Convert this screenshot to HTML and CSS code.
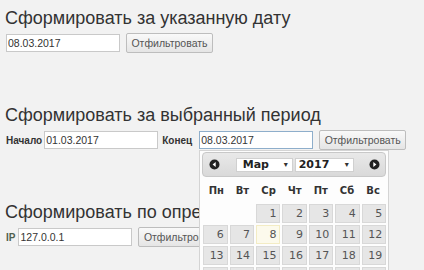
FILE: index.html
```html
<!DOCTYPE html>
<html lang="ru">
<head>
  <meta charset="UTF-8" />
  <title>Отчёты</title>
  <link rel="stylesheet" href="styles.css">
</head>
<body>

  <!-- ONE DATE -->
  <div class="section">
    <h2>Сформировать за указанную дату</h2>
    <div class="row">
      <input type="text" class="field" value="08.03.2017" />
      <button class="btn">Отфильтровать</button>
    </div>
  </div>

  <!-- PERIOD -->
  <div class="section">
    <h2>Сформировать за выбранный период</h2>
    <div class="row">
      <label class="lbl">Начало</label>
      <input type="text" class="field" value="01.03.2017" />
      <label class="lbl lbl-end">Конец</label>
      <span class="picker-wrap">
        <input type="text" class="field focused" value="08.03.2017" />
        <div class="datepicker">
          <div class="dp-header">
            <svg class="dp-icon" width="11" height="11" viewBox="0 0 11 11"><circle cx="5.5" cy="5.5" r="5" fill="#222"/><polygon points="6.7,3 3.6,5.5 6.7,8" fill="#fff"/></svg>
            <div class="dp-selects">
              <div class="dp-select month"><span>Мар</span><span class="arrow">▾</span></div>
              <div class="dp-select year"><span>2017</span><span class="arrow">▾</span></div>
            </div>
            <svg class="dp-icon" width="11" height="11" viewBox="0 0 11 11"><circle cx="5.5" cy="5.5" r="5" fill="#222"/><polygon points="4.3,3 7.4,5.5 4.3,8" fill="#fff"/></svg>
          </div>
          <div class="dp-names">
            <span>Пн</span><span>Вт</span><span>Ср</span><span>Чт</span><span>Пт</span><span>Сб</span><span>Вс</span>
          </div>
          <div class="dp-days" id="days"></div>
        </div>
      </span>
      <button class="btn">Отфильтровать</button>
    </div>
  </div>

  <!-- IP -->
  <div class="section">
    <h2>Сформировать по определённому IP</h2>
    <div class="row">
      <label class="lbl lbl-ip">IP</label>
      <input type="text" class="field" value="127.0.0.1" />
      <button class="btn">Отфильтровать</button>
    </div>
  </div>

  <script>
    // March 2017 starts on Wednesday
    const days = document.getElementById('days');
    let html = '<span class="empty"></span><span class="empty"></span>';
    for (let d = 1; d <= 31; d++) {
      html += `<a class="day${d === 8 ? ' today' : ''}">${d}</a>`;
    }
    days.innerHTML = html;
  </script>

</body>
</html>
```

FILE: styles.css
```css
body { margin: 0; padding: 7px 6px 0; background: #f2f2f2; font-family: "Liberation Sans", Arial, sans-serif; color: #333; }
h2 { font-size: 18px; font-weight: normal; line-height: 22px; margin: 0 0 4px -1px; white-space: nowrap; }
.section { margin-bottom: 51px; }
.row { display: flex; align-items: center; height: 20px; }

.field { width: 114px; height: 18px; box-sizing: border-box; margin: 0; padding: 0 2px 0 1px; border: 1px solid #c9c9c9; background: #fff; font: 10.5px "Liberation Sans", Arial, sans-serif; color: #333; outline: none; }
.field.focused { border-color: #8eaecb; }
.btn { width: 87px; height: 20px; margin-left: 6px; padding: 0; border: 1px solid #bdbdbd; border-radius: 2px; background: linear-gradient(#f9f9f9, #e5e5e5); font: 10.5px "Liberation Sans", Arial, sans-serif; color: #555; flex-shrink: 0; }

.lbl { font-size: 10px; font-weight: bold; color: #333; margin-right: 2px; }
.lbl-end { margin: 0 7px 0 4px; }
.lbl-ip { margin-right: 3px; color: #4f5f4f; }

.picker-wrap { position: relative; display: flex; }
.datepicker { position: absolute; left: 0; top: 19px; z-index: 5; width: 184px; padding: 1px 2px 2px; border: 1px solid #d4d4d4; background: #fdfdfd; font-family: "DejaVu Sans", Verdana, sans-serif; }
.dp-header { height: 23px; display: flex; align-items: center; justify-content: space-between; padding: 0 5px 0 6px; border: 1px solid #c8c8c8; border-radius: 4px; background: linear-gradient(#e9e9e9, #d9d9d9); }
.dp-icon { display: block; }
.dp-selects { display: flex; gap: 2px; }
.dp-select { height: 14px; box-sizing: border-box; display: flex; align-items: center; justify-content: space-between; padding: 0 4px 0 6px; background: #fff; border: 1px solid #d0d0d0; font-size: 11px; font-weight: bold; color: #222; }
.dp-select.month { width: 57px; }
.dp-select.year { width: 59px; padding-left: 3px; }
.dp-select .arrow { font-size: 8px; font-weight: normal; color: #333; }

.dp-names { display: grid; grid-template-columns: repeat(7, 1fr); height: 27px; align-items: center; text-align: center; font-size: 10px; font-weight: bold; color: #333; margin-left: 1px; }
.dp-days { display: grid; grid-template-columns: repeat(7, 1fr); grid-auto-rows: 19px; gap: 2px; margin-left: 1px; }
.day { box-sizing: border-box; border: 1px solid #d8d8d8; background: #e6e6e6; color: #555; font-size: 11px; line-height: 17px; text-align: right; padding-right: 3px; }
.day.today { border-color: #f3ecc4; background: #fcfaec; }
```
